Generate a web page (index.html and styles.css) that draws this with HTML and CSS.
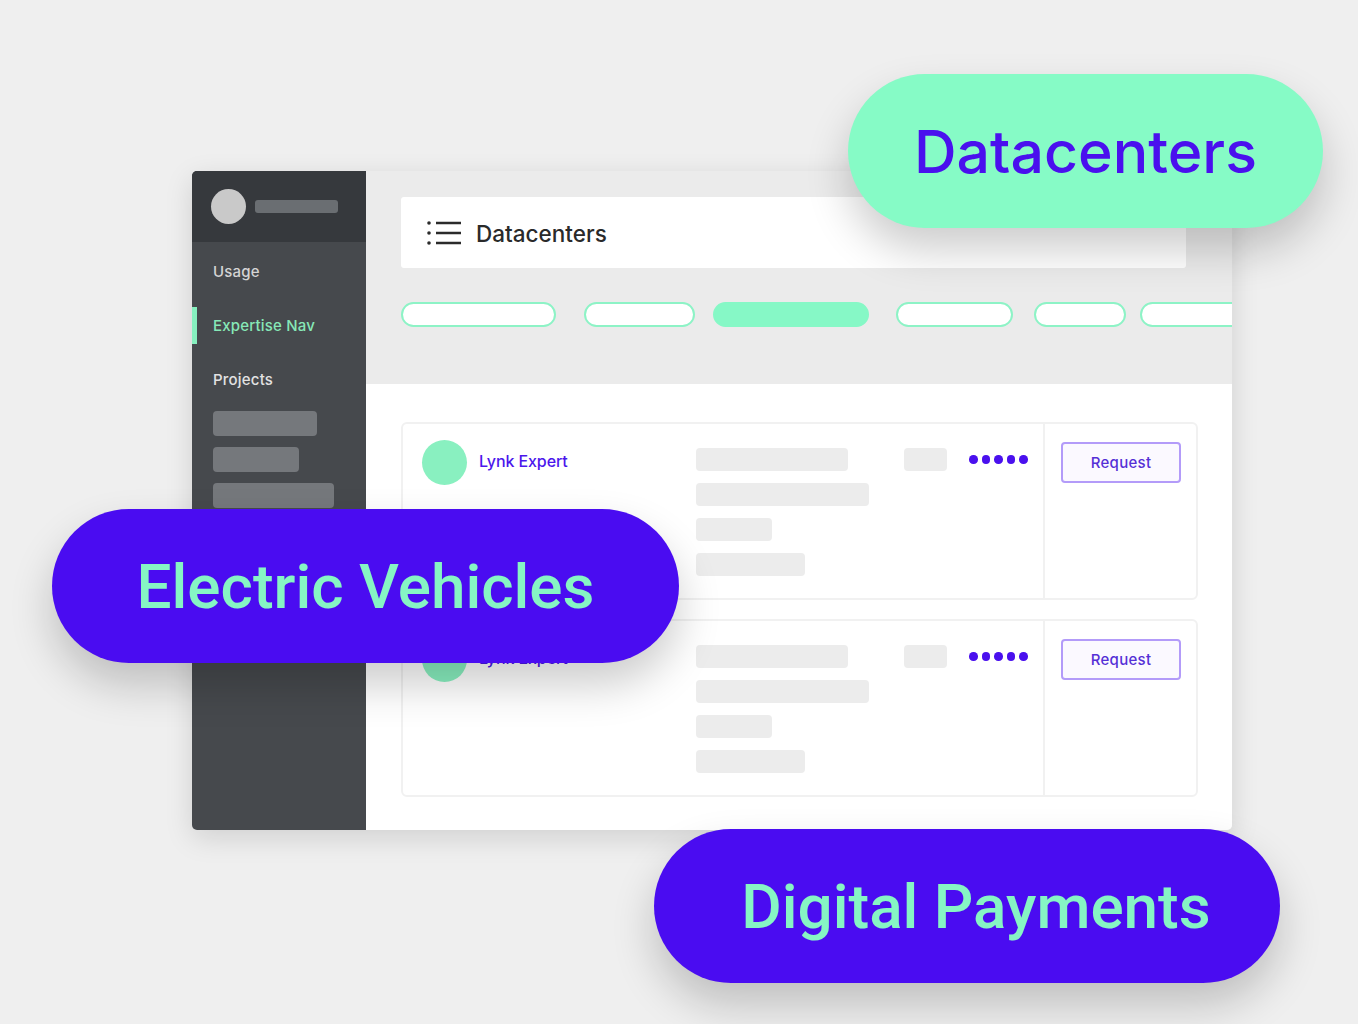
FILE: index.html
```html
<!DOCTYPE html>
<html>
<head>
<meta charset="utf-8">
<link rel="stylesheet" href="styles.css">
</head>
<body>
<div class="stage">

  <!-- the app window mock -->
  <div class="mock">
    <div class="sidebar">
      <div class="side-head">
        <div class="side-avatar"></div>
        <div class="side-name"></div>
      </div>
      <div class="nav">
        <div class="nav-item">Usage</div>
        <div class="nav-item active">Expertise Nav</div>
        <div class="nav-item">Projects</div>
      </div>
      <div class="side-skel">
        <div class="sk sk1"></div>
        <div class="sk sk2"></div>
        <div class="sk sk3"></div>
      </div>
    </div>

    <div class="main">
      <div class="main-top">
        <div class="header">
          <svg class="menu-icon" width="36" height="26" viewBox="0 0 36 26">
            <circle cx="3" cy="3" r="1.8" fill="#2b2b2b"/>
            <circle cx="3" cy="13" r="1.8" fill="#2b2b2b"/>
            <circle cx="3" cy="23" r="1.8" fill="#2b2b2b"/>
            <path d="M10 3H35M10 13H35M10 23H35" stroke="#2b2b2b" stroke-width="2.6"/>
          </svg>
          <span class="title">Datacenters</span>
        </div>
        <div class="chips">
          <div class="chip c1"></div>
          <div class="chip c2"></div>
          <div class="chip c3 on"></div>
          <div class="chip c4"></div>
          <div class="chip c5"></div>
          <div class="chip c6"></div>
        </div>
      </div>

      <div class="list">
        <div class="card">
          <div class="card-main">
            <div class="who">
              <div class="avatar"></div>
              <span class="name">Lynk Expert</span>
            </div>
            <div class="skel">
              <div class="bar b1"></div>
              <div class="bar b2"></div>
              <div class="bar b3"></div>
              <div class="bar b4"></div>
            </div>
            <div class="tag"></div>
            <div class="dots"><i></i><i></i><i></i><i></i><i></i></div>
          </div>
          <div class="card-side">
            <button class="request">Request</button>
          </div>
        </div>

        <div class="card">
          <div class="card-main">
            <div class="who">
              <div class="avatar"></div>
              <span class="name">Lynk Expert</span>
            </div>
            <div class="skel">
              <div class="bar b1"></div>
              <div class="bar b2"></div>
              <div class="bar b3"></div>
              <div class="bar b4"></div>
            </div>
            <div class="tag"></div>
            <div class="dots"><i></i><i></i><i></i><i></i><i></i></div>
          </div>
          <div class="card-side">
            <button class="request">Request</button>
          </div>
        </div>
      </div>
    </div>
  </div>

  <!-- floating labels over the mock -->
  <div class="pill mint pill-dc">Datacenters</div>
  <div class="pill violet pill-ev">Electric Vehicles</div>
  <div class="pill violet pill-dp">Digital Payments</div>

</div>
</body>
</html>
```

FILE: styles.css
```css
body {
  margin: 0;
  background: #efefef;
  font-family: Inter, "Noto Sans", sans-serif;
  overflow: hidden;
}

.stage {
  position: relative;
  width: 1358px;
  height: 1024px;
}

/* window mock */
.mock {
  position: absolute;
  left: 192px; top: 171px;
  width: 1040px; height: 659px;
  display: flex;
  border-radius: 5px;
  overflow: hidden;
  box-shadow: 0 8px 28px rgba(0,0,0,.13);
}

.sidebar {
  width: 174px;
  flex: none;
  background: #46494d;
}

.side-head {
  height: 71px;
  background: #36393d;
  display: flex;
  align-items: center;
  padding-left: 19px;
  gap: 9px;
}
.side-avatar {
  width: 35px; height: 35px;
  border-radius: 50%;
  background: #c9c9c9;
}
.side-name {
  width: 83px; height: 13px;
  border-radius: 3px;
  background: #6a6e72;
}

.nav {
  padding-top: 11px;
  display: flex;
  flex-direction: column;
  gap: 17px;
}
.nav-item {
  height: 37px;
  line-height: 37px;
  padding-left: 16px;
  font-size: 15px;
  font-weight: 500;
  letter-spacing: 0.2px;
  color: #d4d4d4;
  border-left: 5px solid transparent;
}
.nav-item.active {
  border-left-color: #86f0bf;
  color: #86e8b7;
}
.nav-item:last-child { color: #e2e2e2; }

.side-skel {
  margin-top: 13px;
  padding-left: 21px;
  display: flex;
  flex-direction: column;
  gap: 11px;
}
.sk {
  height: 25px;
  border-radius: 4px;
  background: #75787c;
}
.sk1 { width: 104px; }
.sk2 { width: 86px; }
.sk3 { width: 121px; }

/* main */
.main {
  flex: 1;
  background: #fff;
  overflow: hidden;
}

.main-top {
  height: 213px;
  box-sizing: border-box;
  background: #ebebeb;
  padding: 26px 0 0 35px;
}

.header {
  width: 785px; height: 71px;
  box-sizing: border-box;
  background: #fff;
  border-radius: 3px;
  display: flex;
  align-items: center;
  padding-left: 25px;
  gap: 14px;
}
.title {
  font-size: 22.5px;
  font-weight: 500;
  color: #2a2a2a;
  margin-top: 2px;
}

.chips {
  margin-top: 34px;
  display: flex;
  white-space: nowrap;
}
.chip {
  flex: none;
  height: 25px;
  box-sizing: border-box;
  border: 2.5px solid #8df3c6;
  border-radius: 13px;
  background: #fff;
}
.chip.on { background: #86f8c6; border-color: #86f8c6; }
.c1 { width: 155px; }
.c2 { width: 111px; margin-left: 28px; }
.c3 { width: 156px; margin-left: 18px; }
.c4 { width: 117px; margin-left: 27px; }
.c5 { width: 92px; margin-left: 21px; }
.c6 { width: 110px; margin-left: 14px; }

.list {
  padding: 38px 0 0 35px;
  display: flex;
  flex-direction: column;
  gap: 19px;
}

.card {
  width: 797px; height: 178px;
  box-sizing: border-box;
  border: 2px solid #f1f1f1;
  border-radius: 6px;
  display: flex;
}
.card-main {
  width: 640px;
  display: flex;
  align-items: flex-start;
  padding: 16px 0 0 19px;
  box-sizing: border-box;
}
.who {
  width: 274px;
  flex: none;
  display: flex;
  align-items: flex-start;
  gap: 12px;
}
.avatar {
  width: 45px; height: 45px;
  border-radius: 50%;
  background: #89f0c0;
}
.name {
  margin-top: 11px;
  font-size: 16px;
  font-weight: 500;
  color: #4b16ec;
  letter-spacing: -0.1px;
}

.skel {
  width: 208px;
  flex: none;
  margin-top: 8px;
  display: flex;
  flex-direction: column;
  gap: 12px;
}
.bar {
  height: 23px;
  border-radius: 4px;
  background: #ececec;
}
.b1 { width: 152px; }
.b2 { width: 173px; }
.b3 { width: 76px; }
.b4 { width: 109px; }

.tag {
  margin-top: 8px;
  width: 43px; height: 23px;
  border-radius: 4px;
  background: #ececec;
}

.dots {
  margin: 15px 0 0 22px;
  display: flex;
  gap: 4px;
}
.dots i {
  width: 8.5px; height: 8.5px;
  border-radius: 50%;
  background: #4a10ee;
}

.card-side {
  flex: 1;
  border-left: 2px solid #f1f1f1;
  padding: 18px 0 0 16px;
}
.request {
  width: 120px; height: 41px;
  border: 2px solid #b39bf9;
  border-radius: 4px;
  background: #fbf9ff;
  color: #5530d6;
  font-family: Inter, sans-serif;
  font-size: 15px;
  font-weight: 500;
  letter-spacing: 0.3px;
}

/* floating pills */
.pill {
  position: absolute;
  height: 154px;
  box-sizing: border-box;
  border-radius: 77px;
  display: flex;
  align-items: center;
  justify-content: center;
  font-weight: 500;
  box-shadow: 0 22px 44px rgba(0,0,0,.2);
}
.mint {
  background: #86fbc6;
  color: #4a10ee;
  font-family: Inter, sans-serif;
  font-size: 59px;
}
.violet {
  background: #4a0cf1;
  color: #86f5c4;
  font-family: Roboto, sans-serif;
  font-size: 62px;
}
.pill-dc { left: 848px; top: 74px; width: 475px; }
.pill-ev { left: 52px; top: 509px; width: 627px; }
.pill-dp { left: 654px; top: 829px; width: 626px; padding-left: 18px; }
```
